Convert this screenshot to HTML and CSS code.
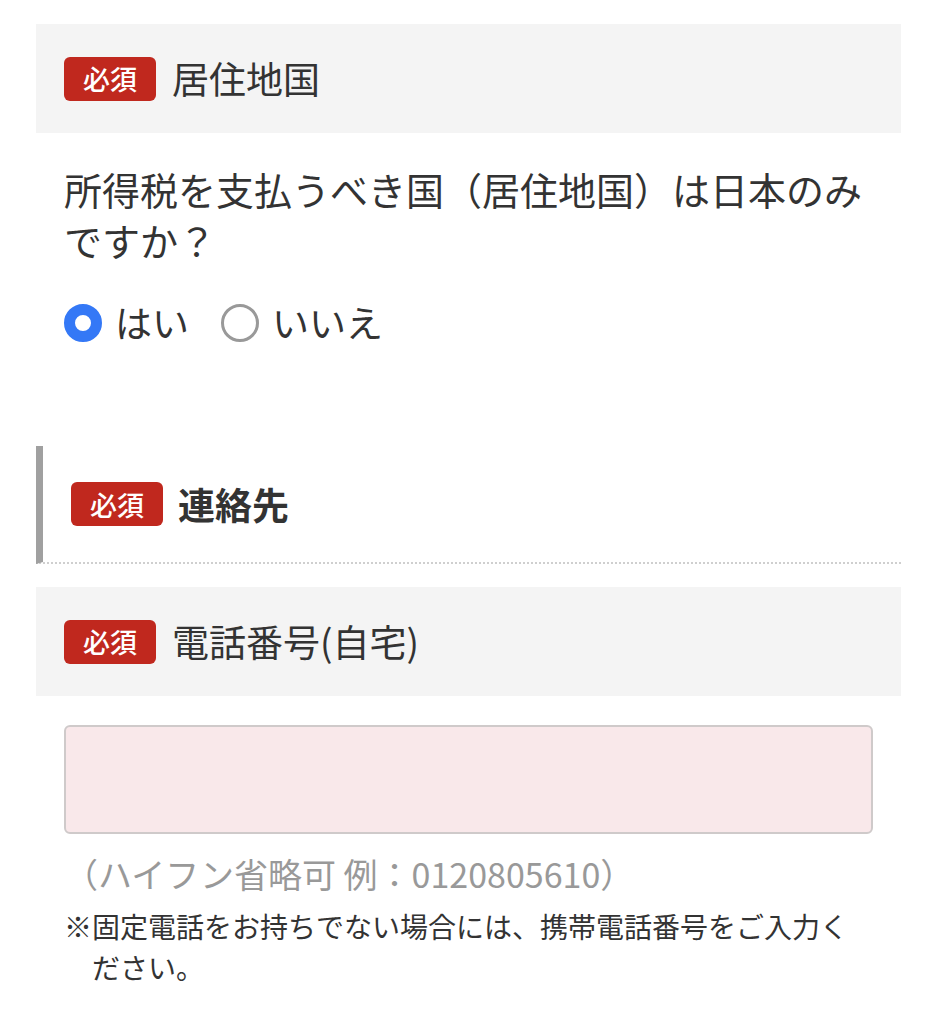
FILE: index.html
```html
<html>
  <head>
    <meta charset="utf-8">
    <title>居住地国・連絡先</title>
    <link rel="stylesheet" href="styles.css">
  </head>
  <body>
    <div class="form">
      <div class="fieldHead">
        <span class="required">必須</span>
        <span class="fieldTitle">居住地国</span>
      </div>
      <div class="fieldBody">
        <p class="question">所得税を支払うべき国（居住地国）は日本のみですか？</p>
        <div class="choices">
          <label class="choice"><input type="radio" name="residence" checked> はい</label>
          <label class="choice"><input type="radio" name="residence"> いいえ</label>
        </div>
      </div>

      <div class="sectionHead">
        <span class="required">必須</span>
        <span class="sectionTitle">連絡先</span>
      </div>

      <div class="fieldHead">
        <span class="required">必須</span>
        <span class="fieldTitle">電話番号(自宅)</span>
      </div>
      <div class="fieldBody phone">
        <input type="tel" class="textInput">
        <p class="hint">（ハイフン省略可 例：0120805610）</p>
        <p class="note">※固定電話をお持ちでない場合には、携帯電話番号をご入力ください。</p>
      </div>
    </div>
  </body>
</html>
```

FILE: styles.css
```css
body {
  margin: 0;
  background: #fff;
  color: #333;
  font-family: "Noto Sans CJK JP", "Noto Sans", sans-serif;
}
.form {
  margin: 24px 36px 0 36px;
}
p {margin: 0;}

.fieldHead {
  background-color: #f4f4f4;
  height: 109px;
  padding: 0 28px;
  display: flex;
  align-items: center;
  gap: 16px;
}
.required {
  background-color: #c0281e;
  color: #fff;
  font-size: 27px;
  font-weight: 500;
  width: 92px;
  height: 44px;
  border-radius: 6px;
  display: flex;
  align-items: center;
  justify-content: center;
  line-height: 1;
}
.fieldTitle {font-size: 37px; line-height: 1;}

.fieldBody {padding: 30px 28px 0 28px;}
.question {font-size: 38px; line-height: 51px;}

.choices {
  display: flex;
  gap: 32px;
  margin-top: 32px;
  font-size: 37px;
  line-height: 51px;
}
.choice {display: flex; align-items: center; gap: 13px;}
.choice input {
  appearance: none;
  -webkit-appearance: none;
  margin: 0;
  width: 38px;
  height: 38px;
  border-radius: 50%;
  border: 3px solid #999;
  background: #fff;
  box-sizing: border-box;
}
.choice input:checked {
  border: 11px solid #3478f6;
}

.sectionHead {
  margin-top: 98px;
  height: 116px;
  border-left: 7px solid #a0a0a0;
  border-bottom: 2px dotted #cfcfcf;
  padding-left: 28px;
  display: flex;
  align-items: center;
  gap: 15px;
  margin-bottom: 23px;
}
.sectionTitle {font-size: 37px; font-weight: bold; line-height: 1;}

.phone {padding-top: 29px;}
.textInput {
  display: block;
  width: 100%;
  height: 109px;
  box-sizing: border-box;
  background-color: #f9e8ea;
  border: 2px solid #cfcaca;
  border-radius: 6px;
  margin: 0;
}
.hint {
  color: #999;
  font-size: 34px;
  line-height: 44px;
  margin-top: 18px;
}
.note {
  font-size: 28px;
  line-height: 41px;
  margin-top: 10px;
  padding-left: 28px;
  text-indent: -28px;
}
```
